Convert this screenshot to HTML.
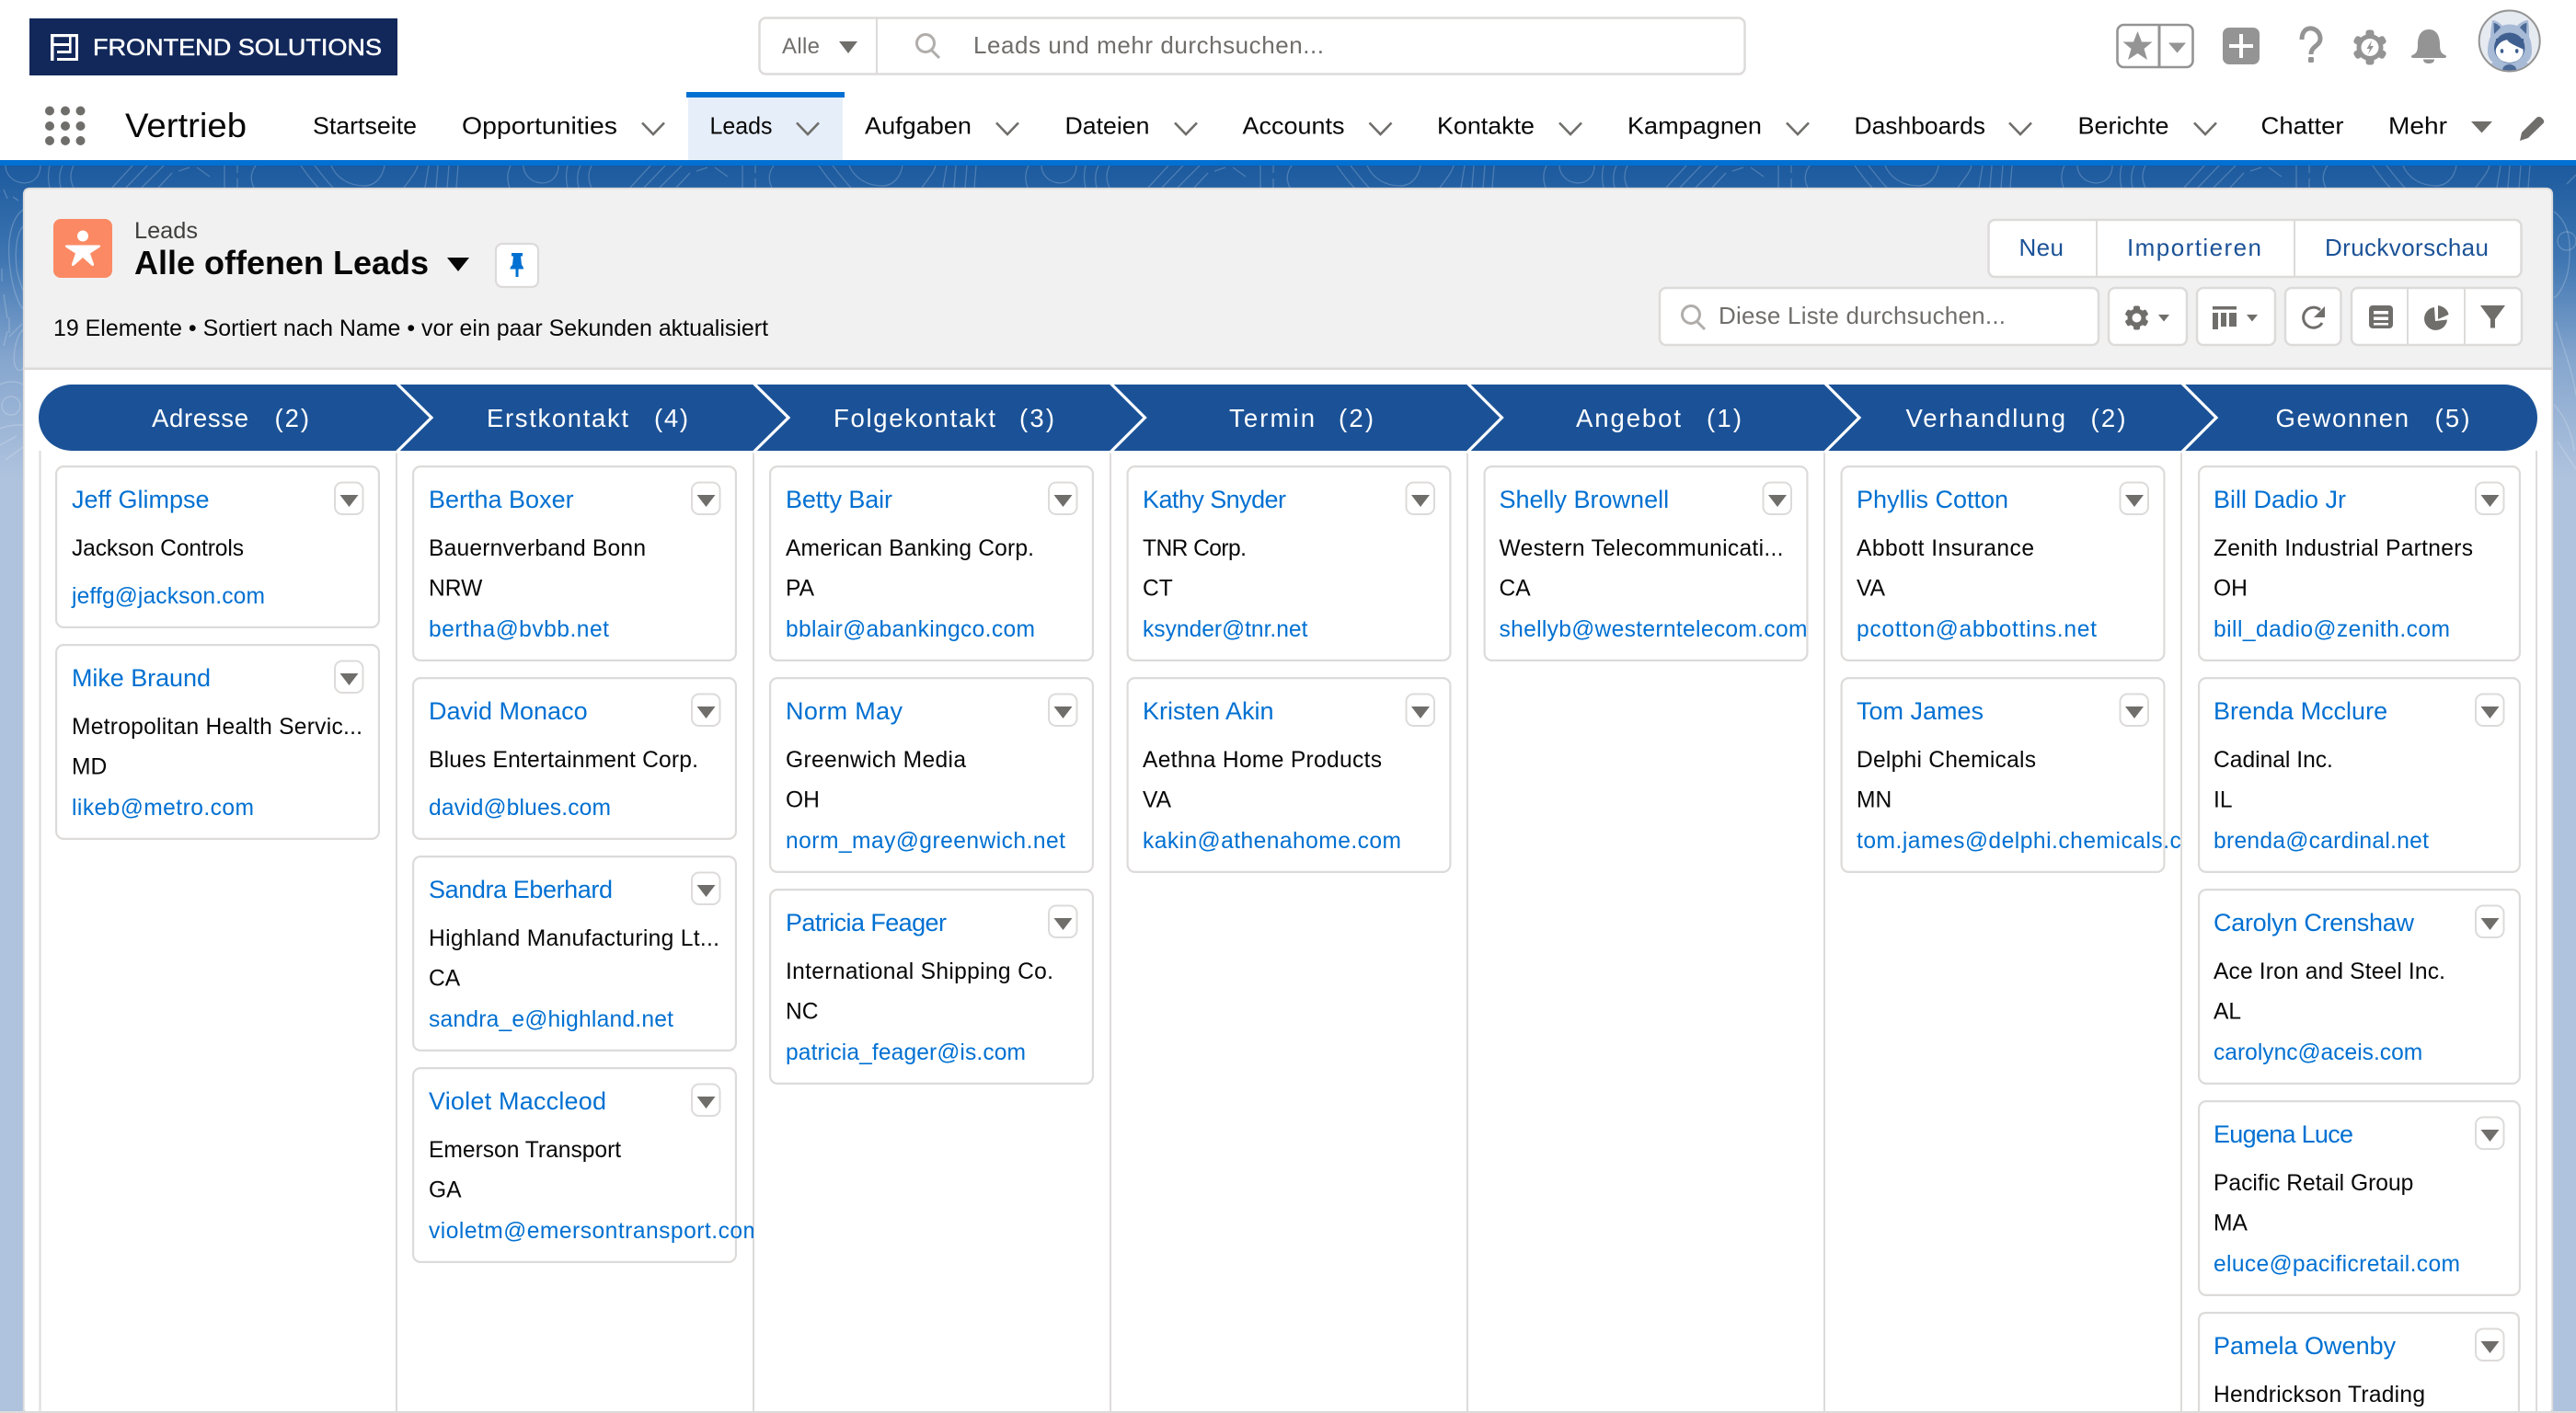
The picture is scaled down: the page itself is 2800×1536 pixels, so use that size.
<!DOCTYPE html>
<html lang="de"><head><meta charset="utf-8"><title>Leads</title>
<style>
html,body{margin:0;padding:0;background:#fff;width:2800px;height:1536px;overflow:hidden}
svg{display:block}
text{font-family:"Liberation Sans",sans-serif;fill:#080707;font-size:24.6px;white-space:pre}
.n{font-size:27px;fill:#0070d2}.l{fill:#0070d2}
.t{font-size:26px}
.p{font-size:27.5px;fill:#fff}
.b{font-size:26px;fill:#1b5297}
.g{fill:#706e6b;font-size:25px}
</style></head><body>
<svg xmlns="http://www.w3.org/2000/svg" width="2800" height="1536" viewBox="0 0 2800 1536">
<defs>
<linearGradient id="bg" gradientUnits="userSpaceOnUse" x1="0" y1="180" x2="0" y2="520">
<stop offset="0" stop-color="#1c5a9e"/><stop offset=".3" stop-color="#3f76b2"/><stop offset=".62" stop-color="#86a6ce"/><stop offset="1" stop-color="#afc3de"/></linearGradient>
<pattern id="cont" patternUnits="userSpaceOnUse" x="-18" y="180" width="563" height="60">
<g fill="none" stroke="#fff" stroke-opacity=".2" stroke-width="1.3">
<path d="M10 0C6 8 6 16 9 24M24 0C24 8 30 18 44 19C56 19 62 10 62 0M72 0C70 8 70 16 72 24M86 0C82 8 82 16 84 24M98 0C94 8 94 16 98 24"/>
<path d="M140 24L162 0M155 24L178 0M172 24L196 0M190 24L205 8M212 6L224 2M232 2L246 12"/>
<path d="M262 0V24M276 0V8M276 14V24M296 0C290 8 290 16 294 24"/>
<path d="M345 0C352 10 358 18 364 24M360 0C368 10 374 18 380 24M378 0C384 14 398 22 414 22C426 22 434 12 436 0"/>
<path d="M457 24C464 14 470 8 472 0M480 24L484 0M492 24L494 0M504 24L506 0M514 24L516 0"/>
</g></pattern>
<g id="c4"><rect x="1.1" y="1.1" width="350.8" height="210.8" rx="8" fill="#fff" stroke="#dddbda" stroke-width="2.2"/><rect x="304" y="18.5" width="30.5" height="34.5" rx="8" fill="#fff" stroke="#dddbda" stroke-width="2"/><path d="M309.5 32H329.5L319.5 45Z" fill="#706e6b"/></g>
<g id="c3"><rect x="1.1" y="1.1" width="350.8" height="174.8" rx="8" fill="#fff" stroke="#dddbda" stroke-width="2.2"/><rect x="304" y="18.5" width="30.5" height="34.5" rx="8" fill="#fff" stroke="#dddbda" stroke-width="2"/><path d="M309.5 32H329.5L319.5 45Z" fill="#706e6b"/></g>
<g id="c4l"><rect x="1.1" y="1.1" width="348.8" height="210.8" rx="8" fill="#fff" stroke="#dddbda" stroke-width="2.2"/><rect x="302" y="18.5" width="30.5" height="34.5" rx="8" fill="#fff" stroke="#dddbda" stroke-width="2"/><path d="M307.5 32H327.5L317.5 45Z" fill="#706e6b"/></g>
<clipPath id="cv"><rect x="449" y="1300" width="370" height="60"/></clipPath>
<clipPath id="ct"><rect x="2001" y="880" width="370" height="60"/></clipPath>
<clipPath id="av"><circle cx="2727.7" cy="44.5" r="32"/></clipPath>
</defs>

<!-- background -->
<rect width="2800" height="1536" fill="#afc3de"/>
<rect y="180" width="2800" height="1356" fill="url(#bg)"/>
<rect y="180" width="2800" height="24" fill="url(#cont)"/>
<g fill="none" stroke="#fff" stroke-opacity=".2" stroke-width="1.4">
<path d="M25 228C14 236 8 256 10 282C12 312 20 330 25 336M25 246C18 254 16 272 18 292C20 304 24 312 25 316"/>
<path d="M4 206L8 216M14 214L20 218M2 292V306M4 320L8 346M10 345V362M8 360L4 376M24 352L10 366"/>
<path d="M25 358C16 368 14 388 16 396C18 404 24 404 25 400"/>
<path d="M0 418C8 414 18 414 25 418"/>
<circle cx="12" cy="441" r="10"/>
<path d="M0 466C10 462 18 462 25 462M0 484L18 474M6 500L25 486"/>
<path d="M2776 230C2790 240 2796 260 2792 290C2790 306 2782 320 2776 324M2778 350C2786 380 2796 400 2800 430M2776 440C2786 450 2796 470 2798 490"/>
<circle cx="2790" cy="262" r="10"/>
<path d="M2790 200L2800 190M2780 480L2800 510"/>
</g>

<!-- top bar -->
<rect width="2800" height="174" fill="#fff"/>
<rect y="174" width="2800" height="6" fill="#0070d2"/>
<rect x="32" y="20" width="400" height="62" fill="#12285a"/>
<g fill="#fff"><rect x="55" y="37" width="3.500" height="29"/><rect x="55" y="37" width="30" height="3.200"/><rect x="55" y="47" width="21" height="3"/><rect x="62" y="55" width="15" height="3"/><rect x="62" y="63" width="23" height="3"/><rect x="82" y="37" width="3" height="29"/><rect x="75" y="37" width="2.600" height="21"/></g>
<text x="101" y="60" style="font-size:25px;fill:#fff;stroke:#fff;stroke-width:.5" textLength="314" lengthAdjust="spacingAndGlyphs">FRONTEND SOLUTIONS</text>

<rect x="825.500" y="19.500" width="1071" height="61" rx="7" fill="#fff" stroke="#dddbda" stroke-width="2.500"/>
<rect x="952" y="20" width="2" height="60" fill="#dddbda"/>
<text class="g" x="850" y="58" style="font-size:24px" textLength="41">Alle</text>
<path d="M912 45H932L922 58Z" fill="#706e6b"/>
<g fill="none" stroke="#b0adab" stroke-width="3"><circle cx="1006" cy="47" r="9.500"/><path d="M1012.500 54.500L1021 63"/></g>
<text class="g" x="1058" y="58" style="font-size:26px" textLength="381">Leads und mehr durchsuchen...</text>

<!-- right icons -->
<rect x="2301.500" y="27" width="82" height="46" rx="7" fill="#fff" stroke="#949494" stroke-width="2.600"/>
<rect x="2345.500" y="27" width="3" height="46" fill="#949494"/>
<path d="M2323.500 34L2328 45.500L2339.500 45.500L2330.500 53L2334 65L2323.500 58L2313 65L2316.500 53L2307.500 45.500L2319 45.500Z" fill="#949494"/>
<path d="M2357 46.500H2376L2366.500 57.500Z" fill="#949494"/>
<rect x="2416" y="30" width="40" height="40" rx="7" fill="#949494"/>
<rect x="2423" y="48" width="26" height="4" fill="#fff"/><rect x="2434" y="37" width="4" height="26" fill="#fff"/>
<path d="M2502 43C2502 25 2522 29 2522 42C2522 50 2512 50 2512 59" fill="none" stroke="#949494" stroke-width="5"/>
<rect x="2509" y="62" width="6" height="6" rx="1.500" fill="#949494"/>
<g fill="#949494"><g transform="translate(2576 51.500)"><circle r="14.500"/><rect x="-4.500" y="-19" width="9" height="38" rx="3"/><rect x="-4.500" y="-19" width="9" height="38" rx="3" transform="rotate(60)"/><rect x="-4.500" y="-19" width="9" height="38" rx="3" transform="rotate(120)"/></g></g>
<circle cx="2576" cy="51.500" r="9.500" fill="#fff"/><path d="M2578 44L2572.500 53H2576L2574 59L2580 50H2576.500Z" fill="#949494"/>
<path d="M2640 32C2649 32 2652 40 2652 48C2652 55 2653 58 2658 60C2660 61 2659 63 2657 63H2623C2621 63 2620 61 2622 60C2627 58 2628 55 2628 48C2628 40 2631 32 2640 32Z" fill="#949494"/>
<path d="M2634 64.500H2646C2646 68 2643 69 2640 69C2637 69 2634 68 2634 64.500Z" fill="#949494"/>
<circle cx="2727.700" cy="44.500" r="33" fill="#e6eaf1" stroke="#949494" stroke-width="2"/>
<g clip-path="url(#av)">
<path d="M2709 22C2713 22 2717 25 2720 28C2725 26 2731 26 2736 28C2739 25 2743 22 2748 22C2749 28 2749 34 2749 40C2751 44 2752 50 2752 56C2752 62 2749 66 2746 68C2751 70 2757 72 2760 82H2696C2699 72 2705 70 2710 68C2707 66 2704 62 2704 56C2704 50 2705 44 2707 40C2707 34 2708 28 2709 22Z" fill="#a7bad6"/>
<path d="M2710.500 25C2713 25 2716 27 2718 30L2711 37Z" fill="#4c6a97"/><path d="M2746.500 25C2744 25 2741 27 2739 30L2746 37Z" fill="#4c6a97"/>
<ellipse cx="2727.700" cy="52" rx="16.700" ry="16.500" fill="#3f5f90"/>
<ellipse cx="2727.700" cy="55.500" rx="15" ry="12.500" fill="#fff"/>
<path d="M2712.500 54C2716 46 2721 44 2725 43C2727 47 2733 49 2743.500 54L2743 42L2713 42Z" fill="#3f5f90"/>
<ellipse cx="2719.500" cy="55.500" rx="1.800" ry="2.400" fill="#3f5f90"/><ellipse cx="2735.700" cy="55.500" rx="1.800" ry="2.400" fill="#3f5f90"/>
<ellipse cx="2727.700" cy="76" rx="7.500" ry="6" fill="#4c6a97"/>
</g>

<!-- nav -->
<rect x="748" y="106" width="168" height="68" fill="#e6eff9"/>
<rect x="746" y="100" width="172" height="6" fill="#0070d2"/>
<g fill="#706e6b"><circle cx="54" cy="120.500" r="5"/><circle cx="71" cy="120.500" r="5"/><circle cx="87.500" cy="120.500" r="5"/><circle cx="54" cy="137" r="5"/><circle cx="71" cy="137" r="5"/><circle cx="87.500" cy="137" r="5"/><circle cx="54" cy="153" r="5"/><circle cx="71" cy="153" r="5"/><circle cx="87.500" cy="153" r="5"/></g>
<text x="136" y="149" style="font-size:37px" textLength="132" lengthAdjust="spacingAndGlyphs">Vertrieb</text>
<g>
<text class="t" x="340" y="145.700" textLength="113" lengthAdjust="spacingAndGlyphs">Startseite</text>
<text class="t" x="502" y="145.700" textLength="169" lengthAdjust="spacingAndGlyphs">Opportunities</text>
<text class="t" x="771.500" y="145.700" textLength="68" lengthAdjust="spacingAndGlyphs">Leads</text>
<text class="t" x="940" y="145.700" textLength="116" lengthAdjust="spacingAndGlyphs">Aufgaben</text>
<text class="t" x="1157.500" y="145.700" textLength="92" lengthAdjust="spacingAndGlyphs">Dateien</text>
<text class="t" x="1350.500" y="145.700" textLength="111" lengthAdjust="spacingAndGlyphs">Accounts</text>
<text class="t" x="1562" y="145.700" textLength="106" lengthAdjust="spacingAndGlyphs">Kontakte</text>
<text class="t" x="1769" y="145.700" textLength="146" lengthAdjust="spacingAndGlyphs">Kampagnen</text>
<text class="t" x="2015.500" y="145.700" textLength="142.500" lengthAdjust="spacingAndGlyphs">Dashboards</text>
<text class="t" x="2258.500" y="145.700" textLength="99" lengthAdjust="spacingAndGlyphs">Berichte</text>
<text class="t" x="2457.500" y="145.700" textLength="90" lengthAdjust="spacingAndGlyphs">Chatter</text>
<text class="t" x="2596" y="145.700" textLength="64" lengthAdjust="spacingAndGlyphs">Mehr</text>
</g>
<path fill="none" stroke="#706e6b" stroke-width="2.600" d="M698 133.500L710 146L722 133.500M866 133.500L878 146L890 133.500M1083 133.500L1095 146L1107 133.500M1277 133.500L1289 146L1301 133.500M1488.500 133.500L1500.500 146L1512.500 133.500M1695 133.500L1707 146L1719 133.500M1942 133.500L1954 146L1966 133.500M2184 133.500L2196 146L2208 133.500M2385 133.500L2397 146L2409 133.500"/>
<path d="M2686 132H2709L2697.500 144.500Z" fill="#706e6b"/>
<path d="M2739 153L2741 144L2757 128C2759 126.500 2761 126.500 2763 128.500C2765.500 130.500 2766 132.500 2764 134.500L2748 150Z" fill="#706e6b"/>

<!-- panel -->
<rect x="25" y="204" width="2750" height="1332" rx="8" fill="#fff"/>
<path d="M25 400V212Q25 204 33 204H2767Q2775 204 2775 212V400Z" fill="#f1f1f1"/>
<rect x="25" y="399.500" width="2750" height="2.500" fill="#dddbda"/>
<path d="M25.800 1536V212Q25.800 204.800 33 204.800H2767Q2774.200 204.800 2774.200 212V1536" fill="none" stroke="#dddbda" stroke-width="1.800"/>

<rect x="58" y="238" width="64" height="64" rx="8" fill="#fb8a64"/>
<circle cx="90" cy="256.500" r="6" fill="#fff"/>
<path d="M72 266.500H108C109.500 266.500 109.500 268 108 269L98 275.500L102 287C102.500 289 100.500 289.500 99.500 288.500L90 280L80.500 288.500C79.500 289.500 77.500 289 78 287L82 275.500L72 269C70.500 268 70.500 266.500 72 266.500Z" fill="#fff"/>
<text x="146" y="259" style="font-size:25px;fill:#3e3e3c" textLength="69" lengthAdjust="spacingAndGlyphs">Leads</text>
<text x="146" y="298" style="font-size:36px;font-weight:bold" textLength="320">Alle offenen Leads</text>
<path d="M486 280H510L498 295Z" fill="#080707"/>
<rect x="539" y="265" width="46" height="47" rx="7" fill="#fff" stroke="#dddbda" stroke-width="2.200"/>
<path d="M556 275H568V278.500H566L567 288C568 289 569 290 569 292.500H563.500V301H560.500V292.500H554.500C554.500 290 556 289 557 288L558 278.500H556Z" fill="#0070d2"/>
<text x="58" y="365" style="font-size:25px" textLength="777" lengthAdjust="spacingAndGlyphs">19 Elemente • Sortiert nach Name • vor ein paar Sekunden aktualisiert</text>

<!-- action buttons -->
<rect x="2161.500" y="239" width="579" height="62" rx="7" fill="#fff" stroke="#dddbda" stroke-width="2.500"/>
<rect x="2278" y="239" width="2" height="62" fill="#dddbda"/><rect x="2493" y="239" width="2" height="62" fill="#dddbda"/>
<text class="b" x="2194.500" y="278" textLength="48.500">Neu</text>
<text class="b" x="2312" y="278" textLength="146">Importieren</text>
<text class="b" x="2527" y="278" textLength="178">Druckvorschau</text>

<g fill="#fff" stroke="#dddbda" stroke-width="2.500">
<rect x="1804" y="313" width="477" height="62" rx="7"/>
<rect x="2292" y="313" width="85" height="62" rx="7"/>
<rect x="2388" y="313" width="85" height="62" rx="7"/>
<rect x="2484" y="313" width="60.500" height="62" rx="7"/>
<rect x="2556" y="313" width="185" height="62" rx="7"/>
</g>
<rect x="2616" y="313" width="2" height="62" fill="#dddbda"/><rect x="2678" y="313" width="2" height="62" fill="#dddbda"/>
<g fill="none" stroke="#b0adab" stroke-width="3"><circle cx="1838" cy="342" r="9.500"/><path d="M1844.500 349.500L1853 358"/></g>
<text class="g" x="1868" y="352" style="font-size:26px" textLength="312">Diese Liste durchsuchen...</text>
<g fill="#706e6b" transform="translate(2322.500 345.500)"><circle r="10"/><rect x="-3.500" y="-13" width="7" height="26" rx="2"/><rect x="-3.500" y="-13" width="7" height="26" rx="2" transform="rotate(60)"/><rect x="-3.500" y="-13" width="7" height="26" rx="2" transform="rotate(120)"/></g>
<circle cx="2322.500" cy="345.500" r="5" fill="#fff"/>
<path d="M2346 342H2358L2352 349.500Z M2442 342H2454L2448 349.500Z" fill="#706e6b"/>
<path d="M2405 333H2431V336.500H2405ZM2405 340H2411V358H2405ZM2414 340H2420V355H2414ZM2423 340H2431V355H2423Z" fill="#706e6b"/>
<path d="M2522 337A11 11 0 1 0 2524 351" fill="none" stroke="#706e6b" stroke-width="3"/>
<path d="M2527 333V345H2515Z" fill="#706e6b"/>
<rect x="2575" y="332" width="26" height="25" rx="4" fill="#706e6b"/>
<rect x="2580" y="338" width="16" height="3.500" fill="#fff"/><rect x="2580" y="344.500" width="16" height="3.500" fill="#fff"/><rect x="2580" y="351" width="16" height="2.500" fill="#fff"/>
<path d="M2646 334A12.500 12.500 0 1 0 2660 347.500L2647 349Z" fill="#706e6b"/>
<path d="M2650 332C2656 333 2661 337 2661.500 342L2650 347Z" fill="#706e6b"/>
<path d="M2696 332H2723L2712 347V356.500H2707V347Z" fill="#706e6b"/>

<!-- column dividers -->
<path d="M43.500 490V1536M431 418V1536M819 418V1536M1207 418V1536M1595 418V1536M1983 418V1536M2371 418V1536M2757 490V1536" stroke="#dddbda" stroke-width="2" fill="none"/>

<!-- pipeline -->
<rect x="42" y="418" width="2716" height="72" rx="36" fill="#1b5297"/>
<path fill="none" stroke="#fff" stroke-width="3.200" d="M430.500 416L469 454L430.500 492M818.500 416L857 454L818.500 492M1206.500 416L1244.500 454L1206.500 492M1594.500 416L1632.500 454L1594.500 492M1983 416L2021 454L1983 492M2371 416L2409 454L2371 492"/>
<g>
<text class="p" x="165" y="464" textLength="105">Adresse</text><text class="p" x="298.500" y="464" textLength="37.500">(2)</text>
<text class="p" x="529" y="464" textLength="154">Erstkontakt</text><text class="p" x="711" y="464" textLength="37">(4)</text>
<text class="p" x="906" y="464" textLength="176">Folgekontakt</text><text class="p" x="1108" y="464" textLength="38">(3)</text>
<text class="p" x="1336" y="464" textLength="93">Termin</text><text class="p" x="1455" y="464" textLength="38">(2)</text>
<text class="p" x="1713" y="464" textLength="114">Angebot</text><text class="p" x="1855" y="464" textLength="38">(1)</text>
<text class="p" x="2071.500" y="464" textLength="173.500">Verhandlung</text><text class="p" x="2272.500" y="464" textLength="38">(2)</text>
<text class="p" x="2473.500" y="464" textLength="144.500">Gewonnen</text><text class="p" x="2646.500" y="464" textLength="38">(5)</text>
</g>

<!-- column 1 -->
<use href="#c3" x="60" y="506"/>
<text class="n" x="78" y="552">Jeff Glimpse</text><text x="78" y="604" textLength="187">Jackson Controls</text><text class="l" x="78" y="656" textLength="210">jeffg@jackson.com</text>
<use href="#c4" x="60" y="700"/>
<text class="n" x="78" y="746" textLength="151">Mike Braund</text><text x="78" y="798" textLength="316">Metropolitan Health Servic...</text><text x="78" y="841.500">MD</text><text class="l" x="78" y="886" textLength="198">likeb@metro.com</text>

<!-- column 2 -->
<use href="#c4" x="448" y="506"/>
<text class="n" x="466" y="552">Bertha Boxer</text><text x="466" y="604" textLength="236">Bauernverband Bonn</text><text x="466" y="647.500">NRW</text><text class="l" x="466" y="692" textLength="196">bertha@bvbb.net</text>
<use href="#c3" x="448" y="736"/>
<text class="n" x="466" y="782">David Monaco</text><text x="466" y="834" textLength="293">Blues Entertainment Corp.</text><text class="l" x="466" y="886" textLength="198">david@blues.com</text>
<use href="#c4" x="448" y="930"/>
<text class="n" x="466" y="976" textLength="200">Sandra Eberhard</text><text x="466" y="1028" textLength="316">Highland Manufacturing Lt...</text><text x="466" y="1071.500">CA</text><text class="l" x="466" y="1116" textLength="266">sandra_e@highland.net</text>
<use href="#c4" x="448" y="1160"/>
<text class="n" x="466" y="1206" textLength="193">Violet Maccleod</text><text x="466" y="1258">Emerson Transport</text><text x="466" y="1301.500">GA</text><text class="l" x="466" y="1346" clip-path="url(#cv)" textLength="362">violetm@emersontransport.com</text>

<!-- column 3 -->
<use href="#c4" x="836" y="506"/>
<text class="n" x="854" y="552" textLength="116">Betty Bair</text><text x="854" y="604" textLength="270">American Banking Corp.</text><text x="854" y="647.500">PA</text><text class="l" x="854" y="692" textLength="271">bblair@abankingco.com</text>
<use href="#c4" x="836" y="736"/>
<text class="n" x="854" y="782" textLength="127">Norm May</text><text x="854" y="834" textLength="196">Greenwich Media</text><text x="854" y="877.500">OH</text><text class="l" x="854" y="922" textLength="304">norm_may@greenwich.net</text>
<use href="#c4" x="836" y="966"/>
<text class="n" x="854" y="1012" textLength="175">Patricia Feager</text><text x="854" y="1064" textLength="291">International Shipping Co.</text><text x="854" y="1107.500">NC</text><text class="l" x="854" y="1152" textLength="261">patricia_feager@is.com</text>

<!-- column 4 -->
<use href="#c4" x="1224.500" y="506"/>
<text class="n" x="1242" y="552" textLength="156">Kathy Snyder</text><text x="1242" y="604" textLength="113">TNR Corp.</text><text x="1242" y="647.500">CT</text><text class="l" x="1242" y="692">ksynder@tnr.net</text>
<use href="#c4" x="1224.500" y="736"/>
<text class="n" x="1242" y="782">Kristen Akin</text><text x="1242" y="834" textLength="260">Aethna Home Products</text><text x="1242" y="877.500">VA</text><text class="l" x="1242" y="922" textLength="281">kakin@athenahome.com</text>

<!-- column 5 -->
<use href="#c4" x="1612.500" y="506"/>
<text class="n" x="1629.500" y="552">Shelly Brownell</text><text x="1629.500" y="604" textLength="309">Western Telecommunicati...</text><text x="1629.500" y="647.500">CA</text><text class="l" x="1629.500" y="692" textLength="335">shellyb@westerntelecom.com</text>

<!-- column 6 -->
<use href="#c4" x="2000.500" y="506"/>
<text class="n" x="2018" y="552">Phyllis Cotton</text><text x="2018" y="604" textLength="193">Abbott Insurance</text><text x="2018" y="647.500">VA</text><text class="l" x="2018" y="692" textLength="261">pcotton@abbottins.net</text>
<use href="#c4" x="2000.500" y="736"/>
<text class="n" x="2018" y="782">Tom James</text><text x="2018" y="834" textLength="195">Delphi Chemicals</text><text x="2018" y="877.500">MN</text><text class="l" x="2018" y="922" clip-path="url(#ct)" textLength="388">tom.james@delphi.chemicals.com</text>

<!-- column 7 -->
<use href="#c4l" x="2389" y="506"/>
<text class="n" x="2406" y="552">Bill Dadio Jr</text><text x="2406" y="604" textLength="282">Zenith Industrial Partners</text><text x="2406" y="647.500">OH</text><text class="l" x="2406" y="692" textLength="257">bill_dadio@zenith.com</text>
<use href="#c4l" x="2389" y="736"/>
<text class="n" x="2406" y="782">Brenda Mcclure</text><text x="2406" y="834">Cadinal Inc.</text><text x="2406" y="877.500">IL</text><text class="l" x="2406" y="922" textLength="234">brenda@cardinal.net</text>
<use href="#c4l" x="2389" y="966"/>
<text class="n" x="2406" y="1012" textLength="218">Carolyn Crenshaw</text><text x="2406" y="1064" textLength="252">Ace Iron and Steel Inc.</text><text x="2406" y="1107.500">AL</text><text class="l" x="2406" y="1152">carolync@aceis.com</text>
<use href="#c4l" x="2389" y="1196"/>
<text class="n" x="2406" y="1242" textLength="152">Eugena Luce</text><text x="2406" y="1294">Pacific Retail Group</text><text x="2406" y="1337.500">MA</text><text class="l" x="2406" y="1382" textLength="268">eluce@pacificretail.com</text>
<path d="M2390.100 1536V1435Q2390.100 1427.100 2398 1427.100H2730Q2737.900 1427.100 2737.900 1435V1536" fill="#fff" stroke="#dddbda" stroke-width="2.200"/>
<rect x="2691" y="1444.500" width="30.500" height="34.500" rx="8" fill="#fff" stroke="#dddbda" stroke-width="2"/><path d="M2696.500 1458H2716.500L2706.500 1471Z" fill="#706e6b"/>
<text class="n" x="2406" y="1472">Pamela Owenby</text><text x="2406" y="1524" textLength="230">Hendrickson Trading</text>

<rect x="0" y="1534" width="2800" height="2" fill="#dddbda"/>
</svg>
</body></html>
